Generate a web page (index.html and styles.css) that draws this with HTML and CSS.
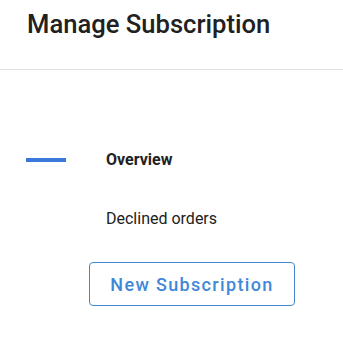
FILE: index.html
```html
<!DOCTYPE html>
<html lang="en">
<head>
    <meta charset="UTF-8">
    <meta name="viewport" content="width=device-width, initial-scale=1.0">
    <title>Manage Subscription</title>
    <link rel="stylesheet" href="styles.css">
</head>
<body>
    <header class="page-header">
        <h1 class="title">Manage Subscription</h1>
    </header>

    <nav class="side-nav">
        <a class="nav-item active" href="#">
            <span class="indicator"></span>
            <span class="nav-label">Overview</span>
        </a>
        <a class="nav-item" href="#">
            <span class="indicator"></span>
            <span class="nav-label">Declined orders</span>
        </a>
        <button class="new-button">New Subscription</button>
    </nav>
</body>
</html>
```

FILE: styles.css
```css
* {
    margin: 0;
    padding: 0;
    box-sizing: border-box;
    font-family: Roboto, "Liberation Sans", Arial, sans-serif;
}

body {
    background-color: #ffffff;
    color: #212121;
}

.page-header {
    height: 70px;
    padding: 9px 27px 0;
    border-bottom: 1px solid #e2e2e2;
}

.title {
    font-size: 25.6px;
    line-height: 30px;
    font-weight: 500;
    color: #212121;
}

.side-nav {
    padding-top: 60px;
    display: flex;
    flex-direction: column;
    align-items: flex-start;
}

.nav-item {
    height: 59px;
    display: flex;
    align-items: center;
    gap: 40px;
    padding-left: 26px;
    color: #212121;
    text-decoration: none;
    font-size: 16px;
    line-height: 24px;
}

.indicator {
    width: 40px;
    height: 4px;
}

.nav-item.active .indicator {
    background-color: #3a78dc;
}

.nav-item.active .nav-label {
    font-weight: 700;
}

.new-button {
    margin: 14px 0 0 89px;
    width: 206px;
    height: 44px;
    border: 1px solid #4286d6;
    border-radius: 4px;
    background-color: #ffffff;
    color: #3f88d8;
    font-size: 18px;
    font-weight: 500;
    letter-spacing: 1.35px;
    cursor: pointer;
}
```
